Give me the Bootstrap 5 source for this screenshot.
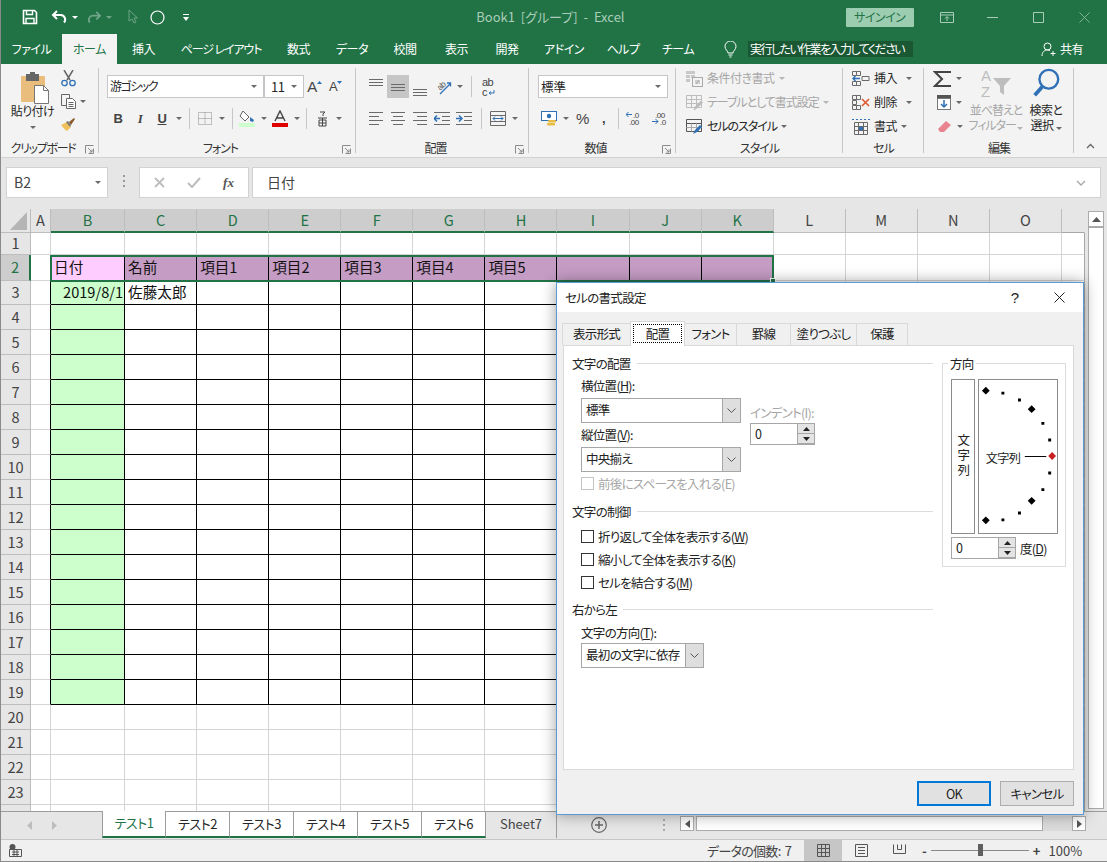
<!DOCTYPE html>
<html lang="ja">

<head>
    <meta charset="UTF-8">
    <title>Book1 [グループ] - Excel</title>
    <link href="https://cdn.jsdelivr.net/npm/bootstrap@5.3.0/dist/css/bootstrap.min.css" rel="stylesheet">
    <style>
        body { margin: 0; overflow: hidden; background: #e6e6e6; }
        .xl-app { position: relative; width: 1107px; height: 862px; overflow: hidden; color: #262626;
            font: 12px/1.2 "Noto Sans CJK JP", "Liberation Sans", sans-serif; font-feature-settings: "palt"; border-left: 1px solid #8a8a8a; border-bottom: 1px solid #8a8a8a; }
        .xl-title { height: 34px; background: #217346; color: #fff; }
        .xl-qat { width: 350px; padding-left: 21px; }
        .xl-qat > * { flex: none; }
        .q8 { margin-left: 8px; } .q10 { margin-left: 10px; } .q11 { margin-left: 11px; } .q13 { margin-left: 13px; } .q16 { margin-left: 16px; } .q18 { margin-left: 18px; } .q4 { margin-left: 4px; }
        .xl-docname { width: 400px; text-align: center; color: #a9cdb8; font-size: 13px; margin-left: 1px; word-spacing: 3px; }
        .xl-signin { width: 68px; height: 19px; background: #9dcdb1; color: #217346; border-radius: 1px; margin-left: 96px; letter-spacing: -.5px; }
        .xl-winbtn { width: 46px; }
        .xl-tabs { height: 30px; background: #217346; color: #fff; font-size: 12px; letter-spacing: -.5px; }
        .xl-tab { flex: none; text-align: center; line-height: 30px; }
        .xl-tab.on { background: #f3f3f3; color: #217346; height: 30px; }
        .t53 { width: 53px; } .t55 { width: 55px; } .t61 { width: 61px; } .t102 { width: 102px; letter-spacing: -1.1px; } .t54 { width: 54px; }
        .t52 { width: 52px; } .t51 { width: 51px; } .t50 { width: 50px; } .t64 { width: 64px; } .t56 { width: 56px; }
        .xl-bulb { margin-left: 18px; flex: none; }
        .xl-ask { background: #1a5833; padding: 0 2px; line-height: 16px; margin-left: 11px; width: 165px; white-space: nowrap; letter-spacing: -1.55px; }
        .xl-share { margin-left: auto; margin-right: 24px; }
        .xl-ribbon { height: 94px; background: #f3f3f3; border-bottom: 1px solid #d2d2d2; letter-spacing: -.5px; }
        .xl-group { flex: none; display: flex; flex-direction: column; height: 93px; position: relative; }
        .xl-group::after { content: ""; position: absolute; right: 0; top: 4px; bottom: 4px; width: 1px; background: #c6c6c6; }
        .g98 { width: 98px; } .g257 { width: 257px; } .g173 { width: 173px; } .g147 { width: 147px; }
        .g167 { width: 167px; } .g81 { width: 81px; } .g150 { width: 150px; }
        .xl-gbody { height: 75px; flex: none; }
        .xl-gcap { height: 18px; display: flex; align-items: center; font-size: 12px; color: #333; letter-spacing: -1px; }
        .xl-gcap > span:first-child { flex-grow: 1; text-align: center; }
        .xl-cap-clip { letter-spacing: -1.3px; }
        .xl-launch { width: 14px; flex: none; }
        .xl-rows { padding-top: 11px; display: flex; flex-direction: column; gap: 9px; }
        .xl-row { display: flex; align-items: center; height: 23px; }
        .pl8 { padding-left: 8px; } .pl9 { padding-left: 9px; } .pl10 { padding-left: 10px; }
        .xl-rb { display: inline-flex; align-items: center; justify-content: center; height: 23px; flex: none; }
        .w8 { width: 8px; } .w9 { width: 9px; } .w11 { width: 11px; } .w12 { width: 12px; } .w16 { width: 16px; }
        .w21 { width: 21px; } .w22 { width: 22px; } .w23 { width: 23px; }
        .xl-rb.active { background: #c6c6c6; }
        .xl-vsep { width: 1px; height: 21px; background: #c6c6c6; }
        .xl-crt { width: 0; height: 0; border: 3px solid transparent; border-top: 3px solid #6a6a6a; border-bottom: 0; display: inline-block; flex: none; }
        .xl-crt.dim { border-top-color: #b5b5b5; }
        .xl-combo { height: 23px; background: #fff; border: 1px solid #c6c6c6; display: flex; align-items: center; padding: 0 6px 0 2px; justify-content: space-between; flex: none; }
        .c156 { width: 157px; } .c40 { width: 40px; margin-left: 0; } .c130 { width: 130px; }
        .xl-tight { letter-spacing: -1.5px; }
        .xl-tight1 { letter-spacing: -1.05px; }
        .xl-bld { font-weight: 700; font-size: 13px; font-family: "Liberation Sans", sans-serif; color: #444; }
        .xl-3rows { padding-top: 3px; display: flex; flex-direction: column; gap: 1px; }
        .xl-3rows .xl-row { height: 23px; white-space: nowrap; }
        .dim { color: #a6a6a6; }
        .xl-paste { width: 59px; }
        .xl-band { height: 51px; background: #e6e6e6; padding: 9px 0 0 5px; flex: none; }
        .xl-fbox { height: 31px; background: #fff; border: 1px solid #d2d2d2; display: flex; align-items: center; flex: none; }
        .xl-name { width: 102px; padding: 0 6px 0 7px; justify-content: space-between; font-size: 14px; color: #444; }
        .xl-fx { width: 110px; margin-left: 30px; justify-content: space-around; padding: 0 3px; }
        .xl-input { width: 849px; margin-left: 3px; padding: 0 14px 0 14px; justify-content: space-between; font-size: 14px; color: #444; }
        .xl-sheetrow { height: 602px; flex: none; position: relative; background: #e6e6e6; }
        .xl-gridwrap { width: 1084px; height: 602px; overflow: hidden; position: relative; flex: none; }
        .xl-grid { table-layout: fixed; border-collapse: separate; border-spacing: 0; width: 1084px; background: #fff; font-size: 14.6px; color: #111; }
        .xl-grid td, .xl-grid th { padding: 0 3px; border-right: 1px solid #d4d4d4; border-bottom: 1px solid #d4d4d4; white-space: nowrap; overflow: hidden; font-weight: 400; line-height: 1; }
        .xl-grid th { background: #e6e6e6; text-align: center; color: #444; border-color: #bdbdbd; font-size: 14.6px; }
        .xl-grid th:last-child { border-right-color: #e6e6e6; border-bottom-color: #a6a6a6; }
        .xl-grid th.sel { background: #cdcdcd; color: #217346; border-bottom: 2px solid #217346; }
        .xl-grid th.rowsel { background: #cdcdcd; color: #217346; border-right: 2px solid #217346; }
        .xl-grid td:last-child { border-right-color: #a6a6a6; }
        .xl-grid td.blk { border-right: 1px solid #000; border-bottom: 1px solid #000; }
        .xl-grid td.lft { border-right: 1px solid #000; }
        .xl-grid td.grn { background: #ccffcc; }
        .xl-grid td.pnk { background: #ffccff; }
        .xl-grid td.pur { background: #c49cc4; }
        .xl-grid td.num { text-align: right; padding-right: 1px; }
        .xl-pick { position: absolute; left: 49px; top: 46px; width: 724px; height: 27px; border: 2px solid #217346; pointer-events: none; }
        .xl-pick::after { content: ""; position: absolute; right: -4px; bottom: -4px; width: 6px; height: 6px; background: #217346; border: 1px solid #fff; }
        .xl-vscroll { width: 16px; margin: 2px 0 0 3px; height: 598px; background: #fff; border: 1px solid #ababab; flex: none; }
        .xl-arrow { height: 16px; display: flex; align-items: center; justify-content: center; border-bottom: 2px solid #ababab; background: #fff; }
        .xl-sheets { height: 28px; background: #e6e6e6; border-top: 1px solid #9c9c9c; flex: none; }
        .xl-snav { width: 101px; padding-left: 26px; gap: 20px; }
        .xl-stab { height: 26px; background: #fff; border-right: 1px solid #9c9c9c; border-bottom: 2px solid #217346; text-align: center; line-height: 23px; font-size: 13px; flex: none; letter-spacing: -.5px; }
        .s64 { width: 64px; } .s63 { width: 64px; }
        .xl-stab.on { color: #217346; border-left: 1px solid #9c9c9c; border-bottom: 2px solid #217346; margin-top: -1px; height: 27px; }
        .xl-stab.off { background: none; border-bottom: 0; width: 71px; color: #444; letter-spacing: 0; }
        .xl-hscroll { width: 406px; height: 15px; margin-left: 9px; background: #dcdcdc; }
        .xl-hbtn { width: 14px; height: 15px; background: #fff; border: 1px solid #ababab; display: flex; align-items: center; justify-content: center; flex: none; }
        .xl-hthumb { width: 347px; height: 15px; background: #fff; border: 1px solid #ababab; margin-left: 2px; flex: none; }
        .xl-status { height: 22px; background: #f0f0f0; border-top: 1px solid #c6c6c6; flex: none; font-size: 13px; color: #444; }
        .xl-count { margin-left: 685px; width: 97px; letter-spacing: -.7px; word-spacing: 2px; white-space: nowrap; }
        .xl-viewbtn { width: 38px; height: 21px; display: flex; align-items: center; justify-content: center; flex: none; }
        .xl-viewbtn.on { background: #c6c6c6; }
        .xl-slider { width: 98px; height: 1px; background: #8a8a8a; position: relative; flex: none; margin: 0 4px; }
        .xl-slider::after { content: ""; position: absolute; left: 47px; top: -6px; width: 5px; height: 12px; background: #5f5f5f; }
        /* ダイアログ */
        .xl-dlg { position: absolute; left: 555px; top: 282px; width: 528px; height: 533px; background: #f0f0f0; border: 1px solid #5a9bd5; box-shadow: 0 0 14px rgba(0, 0, 0, .38); display: flex; flex-direction: column; font-size: 12.5px; color: #222; letter-spacing: -.7px; }
        .xl-dhead { height: 29px; background: #fff; padding: 0 8px; flex: none; font-size: 12.5px; }
        .xl-help { margin-left: auto; margin-right: 35px; font: 15px "Liberation Sans", sans-serif; letter-spacing: 0; }
        .xl-dclose { margin-right: 10px; flex: none; }
        .xl-dtabs { height: 33px; padding: 0 0 0 6px; align-items: flex-end; flex: none; }
        .xl-dtab { height: 22px; background: #f0f0f0; border: 1px solid #d9d9d9; border-bottom: 0; margin-left: -1px; text-align: center; line-height: 20px; flex: none; }
        .d68 { width: 69px; } .d52 { width: 53px; } .d54 { width: 55px; } .d66 { width: 67px; } .d51 { width: 52px; }
        .xl-dtab.on { background: #fff; height: 25px; width: 55px; padding: 2px; position: relative; z-index: 1; margin-bottom: -1px; line-height: 17px; }
        .xl-focus { display: block; border: 1px dotted #000; height: 19px; }
        .xl-dpanel { margin: 0 9px 0 6px; height: 425px; background: #fff; border: 1px solid #d9d9d9; padding: 8px 7px 0 8px; flex: none; display: flex; }
        .xl-dleft { width: 361px; flex: none; }
        .xl-dhd { display: flex; align-items: center; gap: 6px; height: 18px; white-space: nowrap; }
        .xl-dhd::after { content: ""; flex-grow: 1; height: 1px; background: #dcdcdc; }
        .xl-lbl { padding-left: 9px; height: 15px; line-height: 15px; white-space: nowrap; }
        .xl-pick2 { height: 25px; border: 1px solid #a6a6a6; background: #fff; display: flex; align-items: stretch; margin-left: 9px; white-space: nowrap; }
        .xl-pick2 > span:first-child { flex-grow: 1; padding: 0 4px; line-height: 22px; }
        .xl-pick2 > span:last-child { width: 18px; background: #dedede; border-left: 1px solid #a6a6a6; display: flex; align-items: center; justify-content: center; flex: none; }
        .p160 { width: 160px; } .p123 { width: 123px; }
        .m3 { margin-top: 3px; } .m5 { margin-top: 5px; } .m6 { margin-top: 6px; } .m7 { margin-top: 7px; }
        .xl-spin { width: 65px; height: 22px; border: 1px solid #a6a6a6; background: #fff; display: flex; justify-content: space-between; padding-left: 4px; line-height: 20px; }
        .xl-spinb { width: 17px; display: flex; flex-direction: column; }
        .xl-spinb span { flex: 1; display: flex; align-items: center; justify-content: center; background: #e4e4e4; border-left: 1px solid #a6a6a6; border-bottom: 1px solid #a6a6a6; }
        .xl-chk { display: flex; align-items: center; gap: 4px; padding-left: 9px; height: 23px; white-space: nowrap; }
        .xl-box { width: 13px; height: 13px; border: 1px solid #333; background: #fff; flex: none; }
        .xl-chk.dim .xl-box { border-color: #c4c4c4; }
        .xl-indent { margin: 31px 0 0 9px; }
        .xl-indlbl { height: 20px; line-height: 20px; white-space: nowrap; }
        .xl-dir { width: 124px; height: 204px; margin: 9px 0 0 9px; border: 1px solid #dcdcdc; padding: 0 8px; flex: none; }
        .xl-dirtitle { background: #fff; width: max-content; padding: 0 2px; margin: -9px 0 6px -3px; height: 18px; line-height: 18px; }
        .xl-dial { gap: 3px; height: 155px; }
        .xl-vtxt { width: 24px; border: 1px solid #8c8c8c; display: flex; align-items: center; justify-content: center; flex: none; }
        .xl-vtxt span { writing-mode: vertical-rl; text-orientation: upright; letter-spacing: 2.5px; line-height: 1; font-feature-settings: normal; }
        .xl-dsvg { width: 80px; height: 155px; border: 1px solid #8c8c8c; flex: none; display: block; }
        .xl-dfoot { padding: 11px 9px 0 0; gap: 9px; justify-content: flex-end; flex: none; }
        .xl-dbtn { width: 74px; height: 25px; background: #e1e1e1; border: 1px solid #adadad; text-align: center; line-height: 23px; flex: none; }
        .xl-dbtn.on { border: 2px solid #0078d7; line-height: 21px; }
    </style>
</head>

<body>
    <div class="xl-app d-flex flex-column">
        <!-- タイトルバー -->
        <div class="xl-title d-flex align-items-center">
            <div class="xl-qat d-flex align-items-center">
                <svg width="16" height="16" viewBox="0 0 16 16" fill="none" stroke="#fff" stroke-width="1.6"><path d="M1.5 1.5h11l2 2v11h-13z"/><path d="M4.5 1.5v4h6v-4M4 14.5v-5h8v5" stroke-width="1.4"/></svg>
                <svg class="q13" width="17" height="14" viewBox="0 0 17 14" fill="none" stroke="#fff" stroke-width="2"><path d="M6 1 2 5l4 4"/><path d="M2 5h8a4.5 4.5 0 0 1 3 7.5"/></svg>
                <span class="xl-crt q4" style="border-top-color:#fff"></span>
                <svg class="q8" width="16" height="13" viewBox="0 0 17 14" fill="none" stroke="#6fa588" stroke-width="2"><path d="m11 1 4 4-4 4"/><path d="M15 5H7a4.5 4.5 0 0 0-3 7.5"/></svg>
                <span class="xl-crt q4" style="border-top-color:#6fa588"></span>
                <svg class="q16" width="11" height="16" viewBox="0 0 11 16" fill="none" stroke="#6fa588"><path d="M1 1v11l3-2 2 4 2-1-2-4h3.500z"/></svg>
                <svg class="q11" width="15" height="15" viewBox="0 0 15 15" fill="none" stroke="#fff" stroke-width="1.2"><circle cx="7.500" cy="7.500" r="6.500"/></svg>
                <svg class="q18" width="6" height="7" viewBox="0 0 6 7" fill="#fff"><path d="M0 0h6v1H0zM0 3h6L3 7z"/></svg>
            </div>
            <div class="xl-docname">Book1 [グループ] - Excel</div>
            <div class="xl-signin d-flex align-items-center justify-content-center">サインイン</div>
            <div class="xl-winbtn d-flex justify-content-center q10"><svg width="14" height="11" viewBox="0 0 14 11" fill="none" stroke="#a9cdb8"><path d="M.5.500h13v10H.5zM.5 3h13"/><path d="M7 9V5M5 6.500l2-2 2 2"/></svg></div>
            <div class="xl-winbtn d-flex justify-content-center"><svg width="11" height="1"><path d="M0 .5h11" stroke="#a9cdb8"/></svg></div>
            <div class="xl-winbtn d-flex justify-content-center"><svg width="11" height="11" fill="none"><path d="M.5.500h10v10H.5z" stroke="#a9cdb8"/></svg></div>
            <div class="xl-winbtn d-flex justify-content-center"><svg width="11" height="11"><path d="m.5.500 10 10m0-10-10 10" stroke="#7fb297"/></svg></div>
        </div>
        <!-- タブ -->
        <div class="xl-tabs d-flex align-items-center">
            <div class="xl-tab t61">ファイル</div>
            <div class="xl-tab t55 on">ホーム</div>
            <div class="xl-tab t53">挿入</div>
            <div class="xl-tab t102">ページ レイアウト</div>
            <div class="xl-tab t53">数式</div>
            <div class="xl-tab t54">データ</div>
            <div class="xl-tab t52">校閲</div>
            <div class="xl-tab t51">表示</div>
            <div class="xl-tab t50">開発</div>
            <div class="xl-tab t64">アドイン</div>
            <div class="xl-tab t54">ヘルプ</div>
            <div class="xl-tab t56">チーム</div>
            <svg class="xl-bulb" width="13" height="17" viewBox="0 0 13 17" fill="none" stroke="#fff"><path d="M4 12c0-2-3-3.500-3-6.500a5.500 5.500 0 0 1 11 0C12 8.500 9 10 9 12zM4.500 14h4M5.500 16h2"/></svg>
            <div class="xl-ask">実行したい作業を入力してください</div>
            <div class="xl-share d-flex align-items-center gap-1">
                <svg width="15" height="15" viewBox="0 0 15 15" fill="none" stroke="#fff"><circle cx="6.500" cy="4.500" r="3.500"/><path d="M1 14c0-4 2.500-6 5.500-6 1 0 2 .2 2.500.6M12 9v5M9.500 11.500h5"/></svg>
                <span>共有</span>
            </div>
        </div>
        <!-- リボン -->
        <div class="xl-ribbon d-flex">
            <div class="xl-group g98">
                <div class="xl-gbody d-flex">
                    <div class="xl-paste d-flex flex-column align-items-center pt-1">
                        <svg class="mt-1 ms-2" width="30" height="32" viewBox="0 0 30 32"><rect x="1" y="4" width="24" height="26" rx="1" fill="#e9bd7b"/><rect x="6" y="2" width="13" height="7" fill="#666"/><rect x="10" y="0" width="5" height="3" fill="#666"/><path d="M14.500 13.500h9l5 5v13h-14z" fill="#fff" stroke="#777"/><path d="M23.500 13.500v5h5" fill="none" stroke="#777"/></svg>
                        <span class="text-nowrap ms-1">貼り付け</span>
                        <span class="xl-crt mt-2 ms-1"></span>
                    </div>
                    <div class="d-flex flex-column" style="padding-top:3px">
                        <div class="xl-rb w16"><svg width="15" height="17" viewBox="0 0 15 17" fill="none"><path d="M3 0l6 10M12 0 6 10" stroke="#666" stroke-width="1.500"/><circle cx="3.500" cy="13" r="2.700" stroke="#2f70b6" stroke-width="1.300"/><circle cx="11.500" cy="13" r="2.700" stroke="#2f70b6" stroke-width="1.300"/></svg></div>
                        <div class="d-flex align-items-center"><div class="xl-rb w16"><svg width="15" height="15" viewBox="0 0 15 15" fill="#f3f3f3" stroke="#666"><path d="M.5.500h8v11h-8z"/><path d="M5.500 4.500h6l3 3v7h-9z" fill="#fff"/><path d="M7.500 8.500h5M7.500 10.500h5M7.500 12.500h5"/></svg></div><span class="xl-crt ms-1"></span></div>
                        <div class="xl-rb w16"><svg width="16" height="15" viewBox="0 0 16 15"><path d="M1 8l6-3 4 5-4 4C5 13 3 10 1 8z" fill="#f0c15a"/><path d="M9 5l5-4 1 1-4 6z" fill="#8a5a2b"/><path d="M6 5l2-1 3 4-1 2z" fill="#777"/></svg></div>
                    </div>
                </div>
                <div class="xl-gcap"><span class="xl-cap-clip">クリップボード</span><span class="xl-launch"><svg width="9" height="9" viewBox="0 0 9 9" fill="none" stroke="#8a8a8a"><path d="M.5 8.500v-8h8M8.500 3.500v5h-5M3 3l4 4M7 4.500V7H4.500"/></svg></span></div>
            </div>
            <div class="xl-group g257">
                <div class="xl-gbody xl-rows pl8">
                    <div class="xl-row">
                        <div class="xl-combo c156"><span class="xl-tight">游ゴシック</span><span class="xl-crt"></span></div>
                        <div class="xl-combo c40"><span style="font-size:13px" class="ps-1">11</span><span class="xl-crt"></span></div>
                        <div class="xl-rb w21"><span class="xl-bld" style="font-size:15px;font-weight:400">A</span><svg width="5" height="3" viewBox="0 0 5 3" class="mb-2"><path d="M2.500 0 5 3H0z" fill="#2f70b6"/></svg></div>
                        <div class="xl-rb w21"><span class="xl-bld" style="font-size:13px;font-weight:400">A</span><svg width="5" height="3" viewBox="0 0 5 3" class="mb-2"><path d="M2.500 3 5 0H0z" fill="#2f70b6"/></svg></div>
                    </div>
                    <div class="xl-row">
                        <div class="xl-rb w22"><span class="xl-bld">B</span></div>
                        <div class="xl-rb w22"><span class="xl-bld fst-italic" style="font-family:'Liberation Serif',serif">I</span></div>
                        <div class="xl-rb w22"><span class="xl-bld text-decoration-underline">U</span></div>
                        <div class="xl-rb w12"><span class="xl-crt"></span></div>
                        <div class="xl-rb w9"><span class="xl-vsep"></span></div>
                        <div class="xl-rb w22"><svg width="14" height="13" viewBox="0 0 14 13" fill="none" stroke="#8a8a8a" stroke-dasharray="1 1"><path d="M.5.500h13v12H.5zM7 .5v12M.5 6.500h13"/></svg></div>
                        <div class="xl-rb w12"><span class="xl-crt"></span></div>
                        <div class="xl-rb w8"><span class="xl-vsep"></span></div>
                        <div class="xl-rb w22"><svg width="16" height="17" viewBox="0 0 16 17"><path d="M4 1 10 7 6 11 1 6z" fill="#fff" stroke="#666"/><path d="M11 7l4 3-1 2-3-1z" fill="#2f70b6"/><rect y="13" width="16" height="4" fill="#ccffcc"/></svg></div>
                        <div class="xl-rb w11"><span class="xl-crt"></span></div>
                        <div class="xl-rb w22"><svg width="16" height="17" viewBox="0 0 16 17"><path d="M3 11 8 1l5 10M5 8h6" fill="none" stroke="#444" stroke-width="1.400"/><rect y="13" width="16" height="4" fill="#e00000"/></svg></div>
                        <div class="xl-rb w11"><span class="xl-crt"></span></div>
                        <div class="xl-rb w9"><span class="xl-vsep"></span></div>
                        <div class="xl-rb w22"><svg width="9" height="16" viewBox="0 0 9 16" fill="none" stroke="#444"><path d="M2 1h5L5 3M5 3v2M0 7h9M1 9h7v6H1zM4.500 7v8M1 12h7"/></svg></div>
                        <div class="xl-rb w12"><span class="xl-crt"></span></div>
                    </div>
                </div>
                <div class="xl-gcap"><span>フォント</span><span class="xl-launch"><svg width="9" height="9" viewBox="0 0 9 9" fill="none" stroke="#8a8a8a"><path d="M.5 8.500v-8h8M8.500 3.500v5h-5M3 3l4 4M7 4.500V7H4.500"/></svg></span></div>
            </div>
            <div class="xl-group g173">
                <div class="xl-gbody xl-rows pl9">
                    <div class="xl-row">
                        <div class="xl-rb w22"><svg width="14" height="22" stroke="#6a6a6a"><path d="M0 3.500h14M0 6.500h14M0 9.500h14"/></svg></div>
                        <div class="xl-rb w22 active"><svg width="14" height="22" stroke="#6a6a6a"><path d="M0 8.500h14M0 11.500h14M0 14.500h14"/></svg></div>
                        <div class="xl-rb w22"><svg width="14" height="22" stroke="#6a6a6a"><path d="M0 13.500h14M0 16.500h14M0 19.500h14"/></svg></div>
                        <div class="xl-rb w23"><svg width="20" height="20" viewBox="0 0 20 20" fill="none"><path d="M7 17 17 7M14 6h3.500v3.500" stroke="#2f70b6" stroke-width="1.300"/><text x="4" y="12" transform="rotate(-45 8 9)" font-size="8.500" fill="#555" font-family="Liberation Sans">ab</text></svg></div>
                        <div class="xl-rb w11"><span class="xl-crt"></span></div>
                        <div class="xl-rb w12"><span class="xl-vsep"></span></div>
                        <div class="xl-rb w22"><svg width="15" height="20" viewBox="0 0 15 20"><text x="1" y="9" font-size="11" fill="#444" font-family="Liberation Sans">ab</text><text x="1" y="19" font-size="11" fill="#444" font-family="Liberation Sans">c</text><path d="M13 13v3H8m2-1.500L8 16l2 1.500" fill="none" stroke="#2f70b6"/></svg></div>
                    </div>
                    <div class="xl-row">
                        <div class="xl-rb w22"><svg width="14" height="13" stroke="#6a6a6a"><path d="M0 .5h14M0 4.500h10M0 8.500h14M0 12.500h10"/></svg></div>
                        <div class="xl-rb w22"><svg width="14" height="13" stroke="#6a6a6a"><path d="M0 .5h14M2 4.500h10M0 8.500h14M2 12.500h10"/></svg></div>
                        <div class="xl-rb w22"><svg width="14" height="13" stroke="#6a6a6a"><path d="M0 .5h14M4 4.500h10M0 8.500h14M4 12.500h10"/></svg></div>
                        <div class="xl-rb w22"><svg width="16" height="13"><path d="M0 .5h16M0 12.500h16M8 4.500h8M8 8.500h8" stroke="#6a6a6a"/><path d="M0 6.500h6M3 3.500l-3 3 3 3" fill="none" stroke="#2f70b6" stroke-width="1.500"/></svg></div>
                        <div class="xl-rb w22"><svg width="16" height="13"><path d="M0 .5h16M0 12.500h16M8 4.500h8M8 8.500h8" stroke="#6a6a6a"/><path d="M0 6.500h6M3 3.500l3 3-3 3" fill="none" stroke="#2f70b6" stroke-width="1.500"/></svg></div>
                        <div class="xl-rb w12"><span class="xl-vsep"></span></div>
                        <div class="xl-rb w22"><svg width="16" height="15" viewBox="0 0 16 15" fill="none"><path d="M.5.500h15v14H.5zM.5 4.500h15M.5 10.500h15" stroke="#6a6a6a"/><path d="M3 7.500h10M5 5.500l-2 2 2 2M11 5.500l2 2-2 2" stroke="#2f70b6"/></svg></div>
                        <div class="xl-rb w12"><span class="xl-crt"></span></div>
                    </div>
                </div>
                <div class="xl-gcap"><span>配置</span><span class="xl-launch"><svg width="9" height="9" viewBox="0 0 9 9" fill="none" stroke="#8a8a8a"><path d="M.5 8.500v-8h8M8.500 3.500v5h-5M3 3l4 4M7 4.500V7H4.500"/></svg></span></div>
            </div>
            <div class="xl-group g147">
                <div class="xl-gbody xl-rows pl9">
                    <div class="xl-row">
                        <div class="xl-combo c130"><span style="font-size:12.5px;letter-spacing:0">標準</span><span class="xl-crt"></span></div>
                    </div>
                    <div class="xl-row">
                        <div class="xl-rb w22"><svg width="17" height="16" viewBox="0 0 17 16"><rect x=".5" y=".5" width="15" height="9" fill="#fff" stroke="#2f70b6"/><circle cx="8" cy="5" r="2.200" fill="#2f70b6"/><rect x="7" y="9" width="8" height="2.500" rx="1" fill="#e9bd44"/><rect x="6" y="12" width="8" height="2.500" rx="1" fill="#e9bd44"/></svg></div>
                        <div class="xl-rb w12"><span class="xl-crt"></span></div>
                        <div class="xl-rb w21" style="font-size:15px;font-family:'Liberation Sans',sans-serif;color:#444">%</div>
                        <div class="xl-rb w21 fw-bold" style="font-size:13px;color:#444;font-family:'Liberation Sans',sans-serif">,</div>
                        <div class="xl-rb w9"><span class="xl-vsep"></span></div>
                        <div class="xl-rb w22"><svg width="16" height="15" viewBox="0 0 16 15"><text x="7" y="7" font-size="8" fill="#444" font-family="Liberation Sans">.0</text><text x="3" y="14" font-size="8" fill="#444" font-family="Liberation Sans">.00</text><path d="M6 3.500H0M2.500 1 0 3.500 2.500 6" fill="none" stroke="#2f70b6"/></svg></div>
                        <div class="xl-rb w22 ms-1"><svg width="16" height="15" viewBox="0 0 16 15"><text x="3" y="7" font-size="8" fill="#444" font-family="Liberation Sans">.00</text><text x="8" y="14" font-size="8" fill="#444" font-family="Liberation Sans">.0</text><path d="M0 10.500h6M3.500 8 6 10.500 3.500 13" fill="none" stroke="#2f70b6"/></svg></div>
                    </div>
                </div>
                <div class="xl-gcap"><span>数値</span><span class="xl-launch"><svg width="9" height="9" viewBox="0 0 9 9" fill="none" stroke="#8a8a8a"><path d="M.5 8.500v-8h8M8.500 3.500v5h-5M3 3l4 4M7 4.500V7H4.500"/></svg></span></div>
            </div>
            <div class="xl-group g167">
                <div class="xl-gbody xl-3rows pl10">
                    <div class="xl-row dim"><svg width="17" height="16" viewBox="0 0 17 16" fill="#c8c8c8"><path d="M0 0h9v3H0zM0 4h4v3H0zM0 8h4v3H0zM5 4h4v3H5z"/><rect x="6.500" y="6.500" width="10" height="9" fill="#f3f3f3" stroke="#aaa"/><path d="M9 10h5M9 12h5M13 9l-3 4" stroke="#aaa" fill="none"/></svg><span class="ms-1">条件付き書式</span><span class="xl-crt dim ms-1"></span></div>
                    <div class="xl-row dim"><svg width="17" height="16" viewBox="0 0 17 16" fill="none" stroke="#bdbdbd"><path d="M.5.500h15v12H.5zM.5 4.500h15M.5 8.500h15M5.500.5v12M10.500.5v12"/><path d="m8 15 2-4 5-5 1.500 1.500-5 5z" fill="#bdbdbd"/></svg><span class="ms-1 xl-tight1">テーブルとして書式設定</span><span class="xl-crt dim ms-1"></span></div>
                    <div class="xl-row"><svg width="17" height="16" viewBox="0 0 17 16" fill="none"><path d="M.5.500h15v12H.5zM.5 4.500h15" stroke="#555"/><path d="M.5 8.500h15M5.500 4.500v8M10.500 4.500v8" stroke="#aaa"/><path d="m7 15 2-4 5-5 2 1.500-4 5z" fill="#2f70b6"/></svg><span class="ms-1 xl-tight1">セルのスタイル</span><span class="xl-crt ms-1"></span></div>
                </div>
                <div class="xl-gcap"><span>スタイル</span></div>
            </div>
            <div class="xl-group g81">
                <div class="xl-gbody xl-3rows pl9">
                    <div class="xl-row"><svg width="18" height="16" viewBox="0 0 18 16" fill="none" stroke="#6a6a6a"><path d="M.5.500h4v4h-4zM.5 10.500h4v4h-4zM4.500.5h4v4h-4zM4.500 10.500h4v4h-4zM10 5.500h7v4h-7z"/><path d="M8 7.500H1M3.500 5 1 7.500 3.500 10" stroke="#2f70b6" stroke-width="1.400"/></svg><span class="ms-1">挿入</span><span class="xl-crt" style="margin-left:9px"></span></div>
                    <div class="xl-row"><svg width="18" height="16" viewBox="0 0 18 16" fill="none" stroke="#6a6a6a"><path d="M.5.500h4v4h-4zM.5 10.500h4v4h-4zM4.500.5h4v4h-4zM4.500 10.500h4v4h-4zM.5 5.500h4v4h-4z"/><path d="m10 4 7 7m0-7-7 7" stroke="#e0562f" stroke-width="1.600"/></svg><span class="ms-1">削除</span><span class="xl-crt" style="margin-left:9px"></span></div>
                    <div class="xl-row"><svg width="18" height="16" viewBox="0 0 18 16" fill="none" stroke="#6a6a6a"><path d="M2.500 3.500h13v12h-13zM2.500 7.500h13M2.500 11.500h13M6.500 3.500v12M11.500 3.500v12"/><path d="M0 .5h18" stroke="#2f70b6" stroke-dasharray="2 2"/><rect x="7" y="8" width="4" height="3" fill="#2f70b6" stroke="none"/></svg><span class="ms-1">書式</span><span class="xl-crt ms-1"></span></div>
                </div>
                <div class="xl-gcap"><span>セル</span></div>
            </div>
            <div class="xl-group g150">
                <div class="xl-gbody d-flex">
                    <div class="xl-3rows" style="width:45px;padding-left:9px">
                        <div class="xl-row"><svg width="18" height="16" viewBox="0 0 18 16" fill="none" stroke="#444" stroke-width="2"><path d="M17 2V1H2l7 7-7 7h15v-1"/></svg><span class="xl-crt" style="margin-left:5px"></span></div>
                        <div class="xl-row"><svg class="ms-1" width="14" height="15" viewBox="0 0 14 15"><rect width="14" height="3" fill="#555"/><rect x=".5" y="3.500" width="13" height="11" fill="#fff" stroke="#777"/><path d="M7 5v7M4 9l3 3 3-3" fill="none" stroke="#2f70b6" stroke-width="1.500"/></svg><span class="xl-crt" style="margin-left:5px"></span></div>
                        <div class="xl-row"><svg class="ms-1" width="15" height="13" viewBox="0 0 15 13"><path d="M1 9l8-8 5 4-7 7H3z" fill="#e8838f"/></svg><span class="xl-crt" style="margin-left:5px"></span></div>
                    </div>
                    <div class="d-flex flex-column align-items-center dim xl-tight1" style="width:54px;padding-top:4px">
                        <svg width="30" height="31" viewBox="0 0 30 31" font-family="Liberation Sans" font-size="15" fill="#bdbdbd"><text x="0" y="13">A</text><text x="0" y="29">Z</text><path d="M12 10h18l-7 8v9l-4-3v-6z"/></svg>
                        <span style="line-height:15px;margin-top:3px" class="text-nowrap">並べ替えと</span>
                        <span style="line-height:15px" class="text-nowrap">フィルター <span class="xl-crt dim"></span></span>
                    </div>
                    <div class="d-flex flex-column align-items-center" style="width:46px;padding-top:4px">
                        <svg width="30" height="31" viewBox="0 0 30 33" fill="none"><circle cx="18" cy="12" r="10" stroke="#2f70b6" stroke-width="2.500"/><path d="M11 20 3 29" stroke="#2f70b6" stroke-width="4"/></svg>
                        <span style="line-height:15px;margin-top:3px" class="text-nowrap">検索と</span>
                        <span style="line-height:15px" class="text-nowrap">選択 <span class="xl-crt"></span></span>
                    </div>
                </div>
                <div class="xl-gcap"><span>編集</span></div>
            </div>
            <div class="flex-grow-1 d-flex align-items-end justify-content-center pb-2"><svg width="9" height="6" viewBox="0 0 9 6" fill="none" stroke="#666" stroke-width="1.300"><path d="m1 5 3.500-3.500L8 5"/></svg></div>
        </div>
        <!-- 数式バー -->
        <div class="xl-band d-flex align-items-start">
            <div class="xl-fbox xl-name"><span>B2</span><span class="xl-crt"></span></div>
            <svg class="position-relative" width="2" height="14" style="margin:8px -16px 0 15px"><path d="M1 0v2M1 5v2M1 10v2" stroke="#999" stroke-width="2"/></svg>
            <div class="xl-fbox xl-fx">
                <svg width="11" height="11"><path d="m1 1 9 9m0-9-9 9" stroke="#bdbdbd" stroke-width="1.800"/></svg>
                <svg width="14" height="11" fill="none"><path d="m1 6 4 4 8-9" stroke="#bdbdbd" stroke-width="2"/></svg>
                <span class="fst-italic fw-bold" style="font-family:'Liberation Serif',serif;font-size:13px;color:#555">fx</span>
            </div>
            <div class="xl-fbox xl-input"><span>日付</span><svg width="10" height="6" fill="none"><path d="m1 1 4 4 4-4" stroke="#a6a6a6" stroke-width="1.300"/></svg></div>
        </div>
        <!-- シート -->
        <div class="xl-sheetrow d-flex">
            <div class="xl-gridwrap">
                <table class="xl-grid">
                    <colgroup id="sheet-cols"></colgroup>
                    <tbody id="sheet-body"></tbody>
                </table>
                <div class="xl-pick"></div>
            </div>
            <div class="xl-vscroll">
                <div class="xl-arrow"><svg width="9" height="5"><path d="M4.500 0 9 5H0z" fill="#555"/></svg></div>
            </div>
        </div>
        <!-- シートタブ -->
        <div class="xl-sheets d-flex align-items-start">
            <div class="xl-snav d-flex align-items-center" style="height:26px">
                <svg width="5" height="9"><path d="M5 0v9L0 4.500z" fill="#bdbdbd"/></svg>
                <svg width="5" height="9"><path d="M0 0v9l5-4.500z" fill="#bdbdbd"/></svg>
            </div>
            <div class="xl-stab s64 on">テスト1</div>
            <div class="xl-stab s64">テスト2</div>
            <div class="xl-stab s63">テスト3</div>
            <div class="xl-stab s64">テスト4</div>
            <div class="xl-stab s64">テスト5</div>
            <div class="xl-stab s64">テスト6</div>
            <div class="xl-stab off">Sheet7</div>
            <svg class="flex-none" style="margin:5px 0 0 34px" width="16" height="16" viewBox="0 0 16 16" fill="none" stroke="#666"><circle cx="8" cy="8" r="7.300" stroke-width="1.200"/><path d="M8 4v8M4 8h8" stroke-width="1.500"/></svg>
            <svg class="flex-none" style="margin:7px 0 0 56px" width="2" height="12"><path d="M1 0v2M1 5v2M1 10v2" stroke="#aaa" stroke-width="2"/></svg>
            <div class="xl-hscroll d-flex mt-1" style="margin-left:15px">
                <div class="xl-hbtn"><svg width="5" height="8"><path d="M5 0v8L0 4z" fill="#555"/></svg></div>
                <div class="xl-hthumb"></div>
                <div class="flex-grow-1"></div>
                <div class="xl-hbtn"><svg width="5" height="8"><path d="M0 0v8l5-4z" fill="#555"/></svg></div>
            </div>
        </div>
        <!-- ステータスバー -->
        <div class="xl-status d-flex align-items-center">
            <svg class="flex-none" style="margin-left:8px" width="13" height="13" viewBox="0 0 13 13"><circle cx="3.500" cy="3" r="3" fill="#555"/><path d="M.5 5.500h12v7H.5zM3 8h7M3 10.500h7M5 5.500v7M8 5.500v7" fill="none" stroke="#555"/></svg>
            <span class="xl-count">データの個数: 7</span>
            <div class="xl-viewbtn on"><svg width="13" height="13" fill="none" stroke="#555"><path d="M.5.500h12v12H.5zM4.500.5v12M8.500.5v12M.5 4.500h12M.5 8.500h12"/></svg></div>
            <div class="xl-viewbtn"><svg width="13" height="13" fill="none" stroke="#555"><path d="M.5.500h12v12H.5zM3 3.500h7M3 6.500h7M3 9.500h7"/></svg></div>
            <div class="xl-viewbtn"><svg width="13" height="13" fill="none" stroke="#555"><path d="M.5.500v9h12v-9M4.500.5v5h4v-5"/></svg></div>
            <span class="fw-bold ms-1">-</span>
            <div class="xl-slider"></div>
            <span class="fw-bold">+</span>
            <span class="ms-2">100%</span>
        </div>

        <!-- セルの書式設定 -->
        <div class="xl-dlg">
            <div class="xl-dhead d-flex align-items-center">
                <span>セルの書式設定</span>
                <span class="xl-help">?</span>
                <svg class="xl-dclose" width="11" height="11"><path d="m.5.500 10 10m0-10-10 10" stroke="#222"/></svg>
            </div>
            <div class="xl-dtabs d-flex">
                <div class="xl-dtab d68">表示形式</div>
                <div class="xl-dtab on"><span class="xl-focus">配置</span></div>
                <div class="xl-dtab d52">フォント</div>
                <div class="xl-dtab d54">罫線</div>
                <div class="xl-dtab d66">塗りつぶし</div>
                <div class="xl-dtab d51">保護</div>
            </div>
            <div class="xl-dpanel">
                <div class="xl-dleft">
                    <div class="xl-dhd">文字の配置</div>
                    <div class="d-flex">
                        <div>
                            <div class="xl-lbl m6">横位置(<u>H</u>):</div>
                            <div class="xl-pick2 p160 m5"><span>標準</span><span><svg width="9" height="5" fill="none"><path d="m.5.500 4 4 4-4" stroke="#555"/></svg></span></div>
                            <div class="xl-lbl mt-1">縦位置(<u>V</u>):</div>
                            <div class="xl-pick2 p160 m5"><span>中央揃え</span><span><svg width="9" height="5" fill="none"><path d="m.5.500 4 4 4-4" stroke="#555"/></svg></span></div>
                        </div>
                        <div class="xl-indent">
                            <div class="dim xl-indlbl">インデント(I):</div>
                            <div class="xl-spin"><span>0</span><span class="xl-spinb"><span><svg width="7" height="4"><path d="M3.500 0 7 4H0z" fill="#222"/></svg></span><span><svg width="7" height="4"><path d="M3.500 4 7 0H0z" fill="#222"/></svg></span></span></div>
                        </div>
                    </div>
                    <div class="xl-chk dim"><span class="xl-box"></span>前後にスペースを入れる(E)</div>
                    <div class="xl-dhd m7">文字の制御</div>
                    <div class="m5">
                        <div class="xl-chk"><span class="xl-box"></span><span>折り返して全体を表示する(<u>W</u>)</span></div>
                        <div class="xl-chk"><span class="xl-box"></span><span>縮小して全体を表示する(<u>K</u>)</span></div>
                        <div class="xl-chk"><span class="xl-box"></span><span>セルを結合する(<u>M</u>)</span></div>
                    </div>
                    <div class="xl-dhd m6">右から左</div>
                    <div class="xl-lbl m7">文字の方向(<u>T</u>):</div>
                    <div class="xl-pick2 p123 m3"><span>最初の文字に依存</span><span><svg width="9" height="5" fill="none"><path d="m.5.500 4 4 4-4" stroke="#555"/></svg></span></div>
                </div>
                <div class="xl-dir">
                    <div class="xl-dirtitle">方向</div>
                    <div class="xl-dial d-flex">
                        <div class="xl-vtxt"><span>文字列</span></div>
                        <svg class="xl-dsvg" viewBox="0 0 80 155">
                            <g fill="#000">
                                <path d="M7 6l4 4-4 4-4-4zM54 25l4 4-4 4-4-4zM54 119l4 4-4 4-4-4zM7 139l4 4-4 4-4-4z"/>
                                <path d="M23 11h3v3h-3zM40 18h3v3h-3zM64 42h3v3h-3zM71 59h3v3h-3zM71 93h3v3h-3zM64 110h3v3h-3zM40 134h3v3h-3zM23 141h3v3h-3z"/>
                            </g>
                            <path d="M47 77.500h22" stroke="#000"/>
                            <path d="M75 73l4 4-4 4-4-4z" fill="#c81e1e"/>
                            <text x="7" y="84" font-size="12.500" fill="#222" font-family="Noto Sans CJK JP">文字列</text>
                        </svg>
                    </div>
                    <div class="d-flex align-items-center m3">
                        <div class="xl-spin"><span>0</span><span class="xl-spinb"><span><svg width="7" height="4"><path d="M3.500 0 7 4H0z" fill="#222"/></svg></span><span><svg width="7" height="4"><path d="M3.500 4 7 0H0z" fill="#222"/></svg></span></span></div>
                        <span class="ms-1 text-nowrap">度(<u>D</u>)</span>
                    </div>
                </div>
            </div>
            <div class="xl-dfoot d-flex">
                <div class="xl-dbtn on">OK</div>
                <div class="xl-dbtn">キャンセル</div>
            </div>
        </div>
    </div>

    <script src="https://cdn.jsdelivr.net/npm/bootstrap@5.3.0/dist/js/bootstrap.bundle.min.js"></script>
    <script>
        // シートの表を組み立てる
        const colWidths = [30, 20, 74, 72, 72, 72, 72, 72, 72, 72, 72, 72, 72, 72, 72, 72, 23];
        const colNames = ['', 'A', 'B', 'C', 'D', 'E', 'F', 'G', 'H', 'I', 'J', 'K', 'L', 'M', 'N', 'O', ''];
        const row2 = ['日付', '名前', '項目1', '項目2', '項目3', '項目4', '項目5', '', '', ''];
        const cols = document.getElementById('sheet-cols');
        colWidths.forEach(w => {
            const c = document.createElement('col');
            c.style.width = w + 'px';
            cols.appendChild(c);
        });

        function rowHeight(r) {
            if (r === 1) return 22;
            if (r === 2) return 26;
            if (r === 3) return 24;
            return 25;
        }

        let html = '<tr style="height:24px">';
        colNames.forEach((n, i) => {
            if (i === 0) {
                html += '<th style="padding:0 0 0 9px"><svg class="d-block" width="17" height="18"><path d="M17 0v18H0z" fill="#b5b5b5"/></svg></th>';
            } else {
                html += '<th class="' + (i >= 2 && i <= 11 ? 'sel' : '') + '">' + n + '</th>';
            }
        });
        html += '</tr>';

        // 24行目はタブの下に隠れるので番号は出さない
        for (let r = 1; r <= 24; r++) {
            html += '<tr style="height:' + rowHeight(r) + 'px">';
            html += '<th class="' + (r === 2 ? 'rowsel' : '') + '">' + (r < 24 ? r : '') + '</th>';
            for (let c = 1; c <= 16; c++) {
                const inTable = c >= 2 && c <= 11 && r >= 2 && r <= 19;
                let cls = inTable ? 'blk' : '';
                let text = '';
                if (c === 1 && r >= 2 && r <= 19) cls = 'lft';
                if (r === 2 && inTable) {
                    cls += c === 2 ? ' pnk' : ' pur';
                    text = row2[c - 2];
                }
                if (c === 2 && r >= 3 && r <= 19) cls += ' grn';
                if (r === 3 && c === 2) { cls += ' num'; text = '2019/8/1'; }
                if (r === 3 && c === 3) text = '佐藤太郎';
                html += '<td class="' + cls + '">' + text + '</td>';
            }
            html += '</tr>';
        }
        document.getElementById('sheet-body').innerHTML = html;
    </script>
</body>

</html>
